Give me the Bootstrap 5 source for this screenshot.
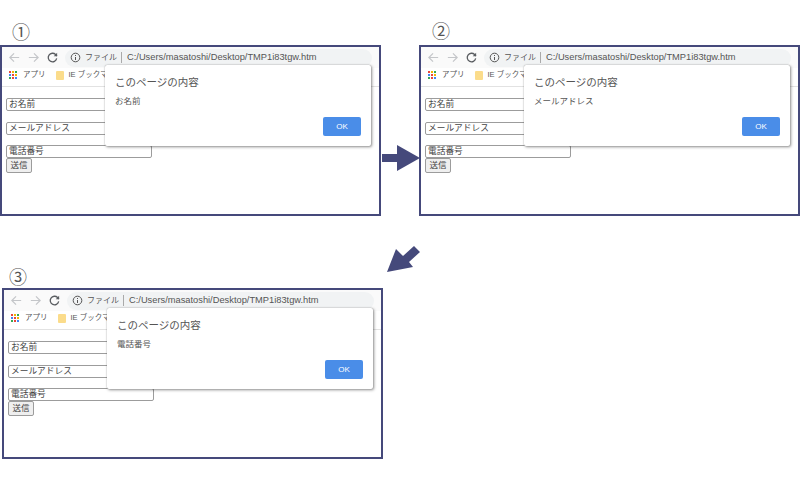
<!DOCTYPE html>
<html lang="ja">

<head>
    <meta charset="UTF-8">
    <title>確認ダイアログ</title>
    <link href="https://cdn.jsdelivr.net/npm/bootstrap@5.3.3/dist/css/bootstrap.min.css" rel="stylesheet">
    <style>
        body {
            background-color: #fff;
            color: #444;
            font-family: "Liberation Sans", "Noto Sans CJK JP", sans-serif;
            width: 800px;
            height: 490px;
            overflow: hidden;
            position: relative;
        }

        .step-no {
            position: absolute;
            font-family: "Noto Sans CJK JP", sans-serif;
            font-size: 18px;
            line-height: 22px;
            color: #555;
        }

        .arrow-svg {
            position: absolute;
            left: 0;
            top: 0;
        }

        .win {
            position: absolute;
            width: 381px;
            height: 171px;
            border: 2px solid #45497b;
            background-color: #fff;
        }

        .win-1 { left: 0; top: 45px; }
        .win-2 { left: 419px; top: 45px; }
        .win-3 { left: 2px; top: 288px; }

        .tool-row {
            height: 21px;
            padding-left: 6px;
            background-color: #fafafa;
        }

        .nav-ico {
            width: 13px;
            height: 13px;
            margin-right: 6px;
            flex: none;
        }

        .addr-pill {
            height: 18px;
            width: 307px;
            padding-left: 5px;
            background-color: #f1f3f4;
            border-radius: 9px;
            font-size: 9.3px;
            color: #555;
            white-space: nowrap;
        }

        .addr-file {
            font-size: 8px;
            margin-left: 4px;
        }

        .addr-sep {
            width: 1px;
            height: 11px;
            background-color: #aaa;
            margin: 0 5px 0 4px;
        }

        .mark-row {
            height: 19px;
            padding: 0 0 4px 7px;
            font-size: 7.5px;
            color: #555;
            border-bottom: 1px solid #e2e2e2;
            white-space: nowrap;
        }

        .apps-ico {
            margin-right: 6px;
        }

        .folder-ico {
            margin: 0 5px 0 10px;
        }

        .page-body {
            padding: 11px 0 0 4px;
        }

        .fake-input {
            display: block;
            width: 146px;
            height: 13px;
            padding: 0 2px;
            border: 1px solid #9c9c9c;
            border-radius: 2px;
            font-size: 8.7px;
            line-height: 11px;
            color: #444;
            margin-bottom: 11px;
        }

        .fake-input.mid-input {
            margin-bottom: 10px;
        }

        .fake-input.last-input {
            margin-bottom: 0;
        }

        .send-btn {
            display: block;
            width: 26px;
            height: 15px;
            padding: 0;
            border: 1px solid #9c9c9c;
            border-radius: 2px;
            background-color: #efefef;
            font-size: 8.5px;
            line-height: 13px;
            color: #444;
        }

        .alert-box {
            position: absolute;
            left: 103px;
            top: 18px;
            width: 266px;
            height: 81px;
            padding: 10px 10px 0;
            background-color: #fff;
            border-radius: 2px;
            box-shadow: 0 0 1px #888, 1px 1px 3px rgba(0, 0, 0, .45);
        }

        .alert-title {
            font-size: 10.5px;
            line-height: 14px;
            color: #555;
            margin-bottom: 6px;
        }

        .alert-msg {
            font-size: 8.5px;
            line-height: 12px;
            color: #555;
            margin-bottom: 10px;
        }

        .ok-btn {
            width: 38px;
            height: 19px;
            padding: 0;
            border: 0;
            border-radius: 2px;
            background-color: #4a8de8;
            color: #fff;
            font-size: 8px;
            line-height: 19px;
        }
    </style>
</head>

<body>
    <div class="step-no" style="left: 12px; top: 20px;">①</div>
    <div class="step-no" style="left: 432px; top: 19px;">②</div>
    <div class="step-no" style="left: 9px; top: 265px;">③</div>

    <div id="windows"></div>

    <svg class="arrow-svg" width="800" height="490" viewBox="0 0 800 490">
        <path d="M382 154H397V145L420 158L397 171V162H382Z" fill="#45497b" />
        <path d="M387 272L396 249L403 256L414 246L420 252L409 262L413 267Z" fill="#45497b" />
    </svg>

    <script>
        const pasos = [
            { clase: 'win-1', msg: 'お名前' },
            { clase: 'win-2', msg: 'メールアドレス' },
            { clase: 'win-3', msg: '電話番号' }
        ];

        const colores = ['#e8453c', '#f4b400', '#34a853', '#4285f4', '#e8453c', '#f4b400', '#34a853', '#e8453c', '#4285f4'];
        const apps = colores.map((c, i) => `<rect x="${(i % 3) * 3}" y="${Math.floor(i / 3) * 3}" width="2" height="2" fill="${c}"/>`);

        document.getElementById('windows').innerHTML = pasos.map(p => `
        <div class="win ${p.clase}">
            <div class="tool-row d-flex align-items-center">
                <svg class="nav-ico" viewBox="0 0 14 14" fill="none" stroke="#c4c6c9" stroke-width="1.3"><path d="M12 7H2M6.5 2.5L2 7l4.5 4.5"/></svg>
                <svg class="nav-ico" viewBox="0 0 14 14" fill="none" stroke="#c4c6c9" stroke-width="1.3"><path d="M2 7h10M7.500 2.500L12 7l-4.500 4.500"/></svg>
                <svg class="nav-ico" viewBox="0 0 14 14" fill="none" stroke="#5a5d61" stroke-width="1.4"><path d="M11.500 8a4.600 4.600 0 1 1-1.200-4.200L11.800 5.300"/><path d="M12 2v3.700H8.300" fill="#5a5d61" stroke="none"/></svg>
                <div class="addr-pill d-flex align-items-center">
                    <svg width="11" height="11" viewBox="0 0 11 11" fill="none" stroke="#555"><circle cx="5.500" cy="5.500" r="4.300"/><path d="M5.500 5v3M5.500 3v1"/></svg>
                    <span class="addr-file">ファイル</span><span class="addr-sep"></span><span>C:/Users/masatoshi/Desktop/TMP1i83tgw.htm</span>
                </div>
            </div>
            <div class="mark-row d-flex align-items-center">
                <svg class="apps-ico" width="8" height="8" viewBox="0 0 8 8">${apps.join('')}</svg>
                <span>アプリ</span>
                <svg class="folder-ico" width="8" height="9" viewBox="0 0 8 9"><rect width="8" height="9" rx="1" fill="#fbdc8b"/></svg>
                <span>IE ブックマ</span>
            </div>
            <div class="page-body">
                <div class="fake-input">お名前</div>
                <div class="fake-input mid-input">メールアドレス</div>
                <div class="fake-input last-input">電話番号</div>
                <button class="send-btn" type="button">送信</button>
            </div>
            <div class="alert-box">
                <div class="alert-title">このページの内容</div>
                <div class="alert-msg">${p.msg}</div>
                <div class="d-flex justify-content-end">
                    <button class="ok-btn" type="button">OK</button>
                </div>
            </div>
        </div>`).join('');
    </script>
    <script src="https://cdn.jsdelivr.net/npm/bootstrap@5.3.3/dist/js/bootstrap.bundle.min.js"></script>
</body>

</html>
